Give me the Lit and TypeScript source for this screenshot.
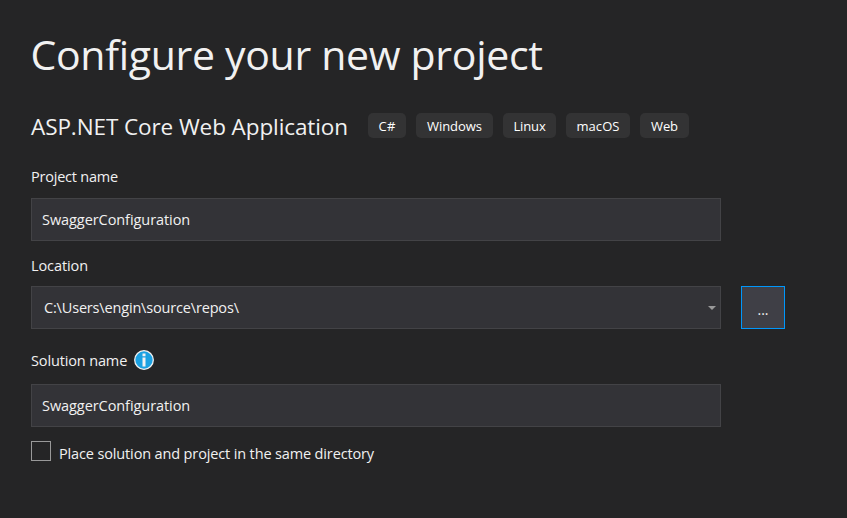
import { LitElement, html, css } from "lit";
import { customElement } from "lit/decorators.js";

@customElement("app-root")
export class AppRoot extends LitElement {
  static styles = css`
    :host {
      display: block;
      box-sizing: border-box;
      height: 518px;
      overflow: hidden;
      padding: 29px 62px 0 31px;
      background: #252526;
      color: #f1f1f1;
      font-family: "Open Sans", "Noto Sans", sans-serif;
      font-size: 14.5px;
      line-height: 20px;
      letter-spacing: -0.14px;
      white-space: nowrap;
    }
    h1, h2 { margin: 0; font-weight: 400; }
    h1 { font-size: 41px; line-height: 50px; letter-spacing: -0.31px; margin-left: -0.5px; }
    .template { display: flex; height: 25px; margin-top: 34px; }
    h2 { width: 337px; font-size: 22.5px; line-height: 27px; letter-spacing: -0.09px; }
    .tags { display: flex; gap: 10px; }
    .tag {
      box-sizing: border-box;
      height: 25px;
      border-radius: 5px;
      background: #333334;
      color: #fff;
      font-size: 13px;
      line-height: 26px;
      letter-spacing: -0.05px;
      text-align: center;
    }
    .cs { width: 38px; letter-spacing: 0.2px; }
    .win { width: 77px; }
    .linux { width: 53px; letter-spacing: -0.12px; }
    .mac { width: 64px; letter-spacing: 0.08px; }
    .web { width: 49px; letter-spacing: -0.15px; }
    .label { display: flex; align-items: center; height: 20px; }
    .project { margin: 29px 0 11px; letter-spacing: -0.22px; }
    .location { margin: 15px 0 10px; letter-spacing: -0.1px; }
    .solution { margin: 21px 0 13px; gap: 7px; height: 21px; }
    .row { display: flex; gap: 20px; }
    .field {
      box-sizing: border-box;
      display: flex;
      align-items: center;
      justify-content: space-between;
      width: 690px;
      height: 43px;
      padding: 0 4px 0 10px;
      border: 1px solid #434346;
      background: #333337;
      letter-spacing: -0.07px;
    }
    .path { padding-left: 12px; letter-spacing: -0.17px; }
    .browse {
      box-sizing: border-box;
      width: 44px;
      height: 43px;
      padding: 4px 0 0;
      border: 1px solid #0097fb;
      background: #3f3f46;
      color: #f1f1f1;
      font: inherit;
      font-size: 14px;
    }
    .check { display: flex; gap: 8px; margin-top: 14px; }
    .box { box-sizing: border-box; width: 20px; height: 20px; border: 1px solid #999; }
    .check-text { padding-top: 3px; }
    svg { display: block; flex: none; }
    .info { margin-bottom: 1px; align-self: flex-start; }
  `;

  render() {
    return html`
      <h1>Configure your new project</h1>
      <div class="template">
        <h2>ASP.NET Core Web Application</h2>
        <div class="tags">
          <span class="tag cs">C#</span>
          <span class="tag win">Windows</span>
          <span class="tag linux">Linux</span>
          <span class="tag mac">macOS</span>
          <span class="tag web">Web</span>
        </div>
      </div>
      <div class="label project">Project name</div>
      <div class="field">SwaggerConfiguration</div>
      <div class="label location">Location</div>
      <div class="row">
        <div class="field path">
          <span>C:\\Users\\engin\\source\\repos\\</span>
          <svg width="8" height="4" viewBox="0 0 8 4"><path d="M0 0h8L4 4z" fill="#999" /></svg>
        </div>
        <button class="browse">...</button>
      </div>
      <div class="label solution">
        <span>Solution name</span>
        <svg class="info" width="20" height="20" viewBox="0 0 20 20">
          <circle cx="10" cy="10" r="9.3" fill="#1ba1e2" stroke="#f1f1f1" stroke-width="1.3" />
          <path d="M8.5 3.5h3v2.7h-3zM8.5 7.4h3v9h-3z" fill="#f1f1f1" />
        </svg>
      </div>
      <div class="field">SwaggerConfiguration</div>
      <label class="check">
        <span class="box"></span>
        <span class="check-text">Place solution and project in the same directory</span>
      </label>
    `;
  }
}
